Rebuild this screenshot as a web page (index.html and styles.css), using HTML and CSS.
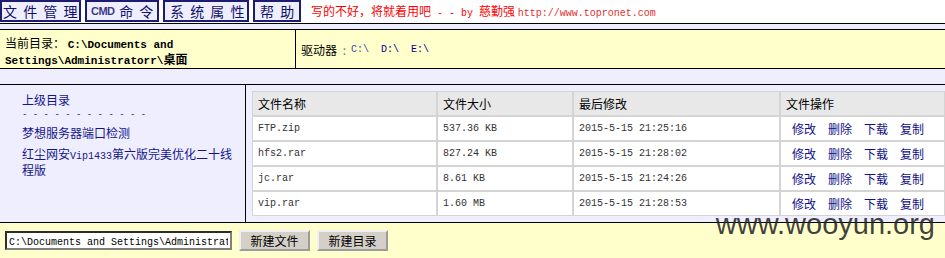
FILE: index.html
```html
<!DOCTYPE html>
<html lang="zh-CN">
<head>
  <meta charset="UTF-8" />
  <title>文件管理</title>
  <link rel="stylesheet" href="styles.css">
</head>
<body>
  <!-- menu du haut -->
  <div class="nav">
    <a class="tab t1" href="#">文 件 管 理</a>
    <a class="tab t2" href="#"><span class="cmd">CMD</span> 命 令</a>
    <a class="tab t3" href="#">系 统 属 性</a>
    <a class="tab t4" href="#">帮 助</a>
    <span class="motto">写的不好，将就着用吧<span class="mono"> - - by </span>慈勤强 <span class="mono url">http://www.topronet.com</span></span>
  </div>

  <div class="strip"></div>

  <div class="pathbar">
    <div class="cur">当前目录： <b class="mono">C:\Documents and Settings\Administratorr\</b><b>桌面</b></div>
    <div class="drives">驱动器 <span class="colon">:</span> <a class="mono c" href="#">C:\</a><a class="mono" href="#">D:\</a><a class="mono" href="#">E:\</a></div>
  </div>

  <div class="strip2"></div>

  <div class="main">
    <div class="side">
      <a class="up" href="#">上级目录</a>
      <div class="dash mono">- - - - - - - - - - - -</div>
      <a class="lnk l1" href="#">梦想服务器端口检测</a>
      <a class="lnk l2" href="#">红尘网安<span class="mono">Vip1433</span>第六版完美优化二十线程版</a>
    </div>
    <div class="files">
      <table>
        <colgroup>
          <col class="c1"><col class="c2"><col class="c3"><col class="c4">
        </colgroup>
        <tr class="head">
          <td>文件名称</td><td>文件大小</td><td>最后修改</td><td>文件操作</td>
        </tr>
        <tr>
          <td class="mono">FTP.zip</td><td class="mono">537.36 KB</td><td class="mono">2015-5-15 21:25:16</td>
          <td class="ops"><a href="#">修改</a><a href="#">删除</a><a href="#">下载</a><a href="#">复制</a></td>
        </tr>
        <tr>
          <td class="mono">hfs2.rar</td><td class="mono">827.24 KB</td><td class="mono">2015-5-15 21:28:02</td>
          <td class="ops"><a href="#">修改</a><a href="#">删除</a><a href="#">下载</a><a href="#">复制</a></td>
        </tr>
        <tr>
          <td class="mono">jc.rar</td><td class="mono">8.61 KB</td><td class="mono">2015-5-15 21:24:26</td>
          <td class="ops"><a href="#">修改</a><a href="#">删除</a><a href="#">下载</a><a href="#">复制</a></td>
        </tr>
        <tr>
          <td class="mono">vip.rar</td><td class="mono">1.60 MB</td><td class="mono">2015-5-15 21:28:53</td>
          <td class="ops"><a href="#">修改</a><a href="#">删除</a><a href="#">下载</a><a href="#">复制</a></td>
        </tr>
      </table>
    </div>
  </div>

  <div class="foot">
    <input type="text" class="newname" value="C:\Documents and Settings\Administratorr\桌面\" />
    <button type="button">新建文件</button>
    <button type="button">新建目录</button>
  </div>

  <div class="watermark">www.wooyun.org</div>
</body>
</html>
```

FILE: styles.css
```css
body {
  margin: 0;
  background: #eeeeff;
  font-family: "Noto Sans CJK SC", sans-serif;
  font-size: 12px;
  color: #000;
  position: relative;
  min-height: 258px;
  overflow: hidden;
}

a {
  text-decoration: none;
}

.mono {
  font-family: "Liberation Mono", "Noto Sans CJK SC", monospace;
  font-size: 10px;
  white-space: pre;
}

/* menu */
.nav {
  display: flex;
  align-items: flex-start;
  gap: 4px;
  height: 23px;
  background: #fff;
}

.tab {
  display: flex;
  align-items: center;
  box-sizing: border-box;
  height: 22px;
  padding-left: 1px;
  border: 2px solid #1c1c70;
  background: #eeeeff;
  color: #11116b;
  font-size: 14px;
  letter-spacing: 1.5px;
  white-space: pre;
}

.t1 { width: 81px; }
.t2 { width: 74px; padding-left: 4px; }
.t3 { width: 86px; padding-left: 5px; }
.t4 { width: 48px; padding-left: 5px; }

.cmd {
  font-family: "Liberation Sans", sans-serif;
  font-size: 11px;
  font-weight: bold;
  letter-spacing: -0.5px;
  color: #3a3a8c;
}

.motto {
  margin-left: 6px;
  line-height: 22px;
  color: #ff0000;
}

.motto .url {
  color: #e03030;
}

.strip {
  height: 5px;
  border-top: 1px solid #000;
}

/* chemin courant */
.pathbar {
  display: flex;
  height: 38px;
  background: #ffffcc;
  border-top: 1px solid #000;
  border-bottom: 1px solid #000;
}

.cur {
  box-sizing: border-box;
  width: 296px;
  padding: 6px 5px 0;
  border-right: 1px solid #000;
  line-height: 13px;
}

.cur .mono {
  font-size: 11px;
  white-space: normal;
}

.drives {
  display: flex;
  align-items: center;
  padding-left: 5px;
  white-space: pre;
}

.drives .colon {
  color: #777;
  margin: 0 5px 0 3px;
}

.drives a {
  color: #000099;
  margin-right: 12px;
}

.drives a.c {
  color: #4444bb;
}

.strip2 {
  height: 15px;
}

/* zone principale */
.main {
  display: flex;
  height: 137px;
  border-top: 1px solid #000;
  border-bottom: 1px solid #000;
}

.side {
  box-sizing: border-box;
  width: 246px;
  flex-shrink: 0;
  padding: 8px 6px 0 22px;
  border-right: 1px solid #000;
  line-height: 13px;
}

.side a,
.side .dash {
  display: block;
  color: #15158a;
}

.side .dash {
  margin-top: 3px;
  font-size: 9px;
}

.side .l2 .mono {
  white-space: normal;
}

.l1 { margin-top: 4px; }
.l2 { margin-top: 8px; }

.files {
  padding: 6px 0 0 6px;
}

table {
  width: 693px;
  table-layout: fixed;
  border-collapse: separate;
  border-spacing: 0;
}

col.c1 { width: 185px; }
col.c2 { width: 136px; }
col.c3 { width: 207px; }
col.c4 { width: 165px; }

td {
  padding: 0 5px;
  line-height: 23px;
  background: #fff;
  border: 1px solid #d4d4d4;
  white-space: nowrap;
  color: #222;
}

td.mono {
  font-size: 10px;
  color: #333;
}

tr.head td {
  background: #e8e8e8;
  color: #000;
}

td.ops {
  padding-left: 11px;
}

td.ops a {
  color: #10108a;
  margin-right: 12px;
}

/* bas de page */
.foot {
  display: flex;
  align-items: center;
  gap: 7px;
  height: 35px;
  padding: 0 5px;
  background: #ffffcc;
}

.newname {
  box-sizing: border-box;
  width: 227px;
  height: 19px;
  padding: 0 2px;
  border: 2px inset #808080;
  background: #fff;
  font-family: "Liberation Mono", monospace;
  font-size: 10px;
  color: #000;
}

button {
  box-sizing: border-box;
  width: 71px;
  height: 21px;
  padding: 0;
  border: 2px outset #f0f0f0;
  background: #d4d0c8;
  font-family: "Noto Sans CJK SC", sans-serif;
  font-size: 12px;
  color: #000;
}

.watermark {
  position: absolute;
  right: 10px;
  top: 210px;
  font-family: "Liberation Sans", sans-serif;
  font-size: 29px;
  line-height: 29px;
  color: rgba(40, 40, 40, 0.88);
}
```
